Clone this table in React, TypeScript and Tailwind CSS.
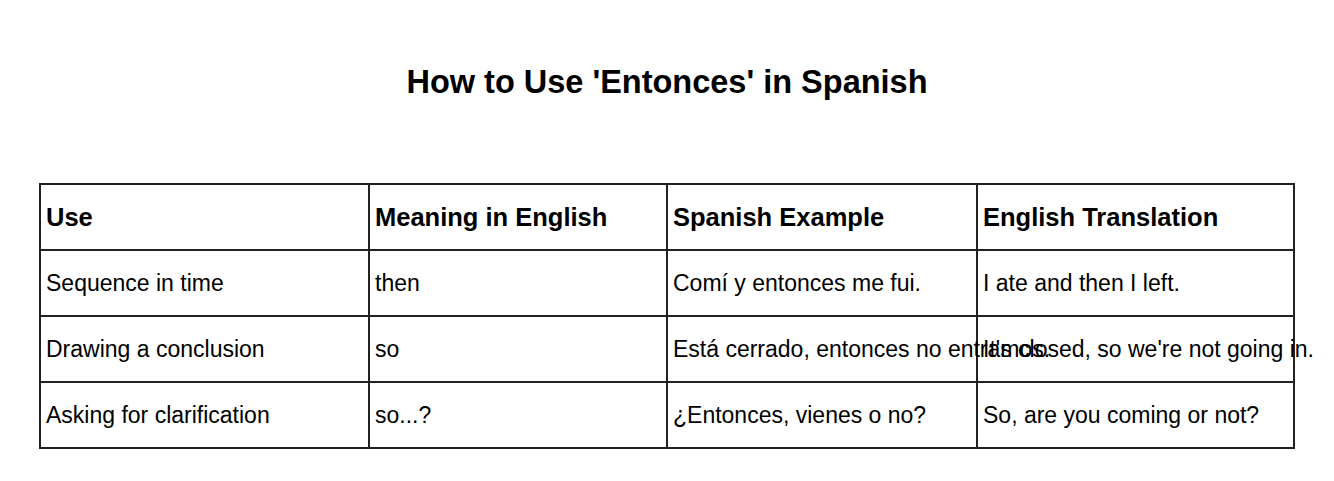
const rows = [
  ["Sequence in time", "then", "Comí y entonces me fui.", "I ate and then I left."],
  ["Drawing a conclusion", "so", "Está cerrado, entonces no entramos.", "It's closed, so we're not going in."],
  ["Asking for clarification", "so...?", "¿Entonces, vienes o no?", "So, are you coming or not?"],
];

const headers = ["Use", "Meaning in English", "Spanish Example", "English Translation"];

export default function App() {
  return (
    <div className="min-h-screen bg-white text-black pt-[58px]" style={{ fontFamily: '"Liberation Sans", Arial, sans-serif' }}>
      <h1 className="text-center text-[32.5px] font-bold leading-[48px]">How to Use 'Entonces' in Spanish</h1>
      <table className="mt-[77px] ml-[39px] w-[1254px] table-fixed border-collapse">
        <colgroup>
          <col className="w-[329px]" />
          <col className="w-[298px]" />
          <col className="w-[310px]" />
          <col className="w-[317px]" />
        </colgroup>
        <thead>
          <tr className="h-[66px]">
            {headers.map((h) => (
              <th key={h} className="border-2 border-[#222] px-[5px] text-left text-[25.5px] font-bold whitespace-nowrap">{h}</th>
            ))}
          </tr>
        </thead>
        <tbody>
          {rows.map((r, i) => (
            <tr key={i} className="h-[66px]">
              {r.map((c, j) => (
                <td key={j} className="border-2 border-[#222] px-[5px] text-[23px] whitespace-nowrap">{c}</td>
              ))}
            </tr>
          ))}
        </tbody>
      </table>
    </div>
  );
}
